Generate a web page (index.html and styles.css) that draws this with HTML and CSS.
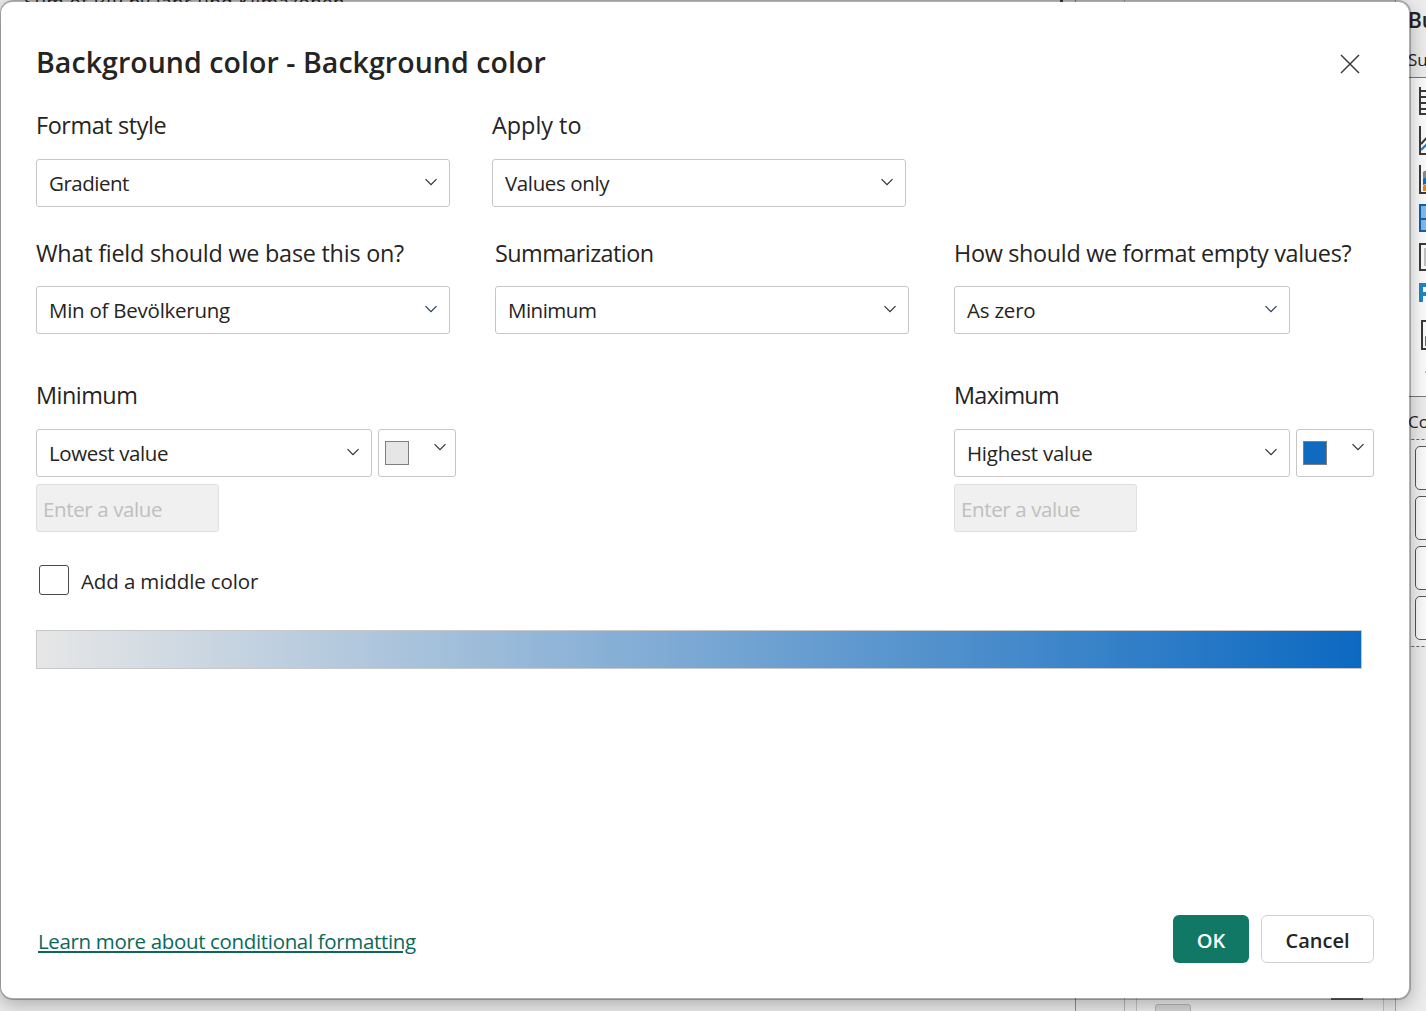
FILE: index.html
```html
<!DOCTYPE html>
<html lang="en">
<head>
<meta charset="utf-8">
<title>Background color</title>
<link rel="stylesheet" href="styles.css">
</head>
<body>
<svg class="defs" aria-hidden="true">
  <symbol id="chev" viewBox="0 0 14 8"><path d="M1.5 1.2 7 6.7 12.500 1.2" fill="none" stroke="currentColor" stroke-width="1.2"/></symbol>
</svg>
<div class="app">
  <main class="canvas"><span class="visual-title">Sum of BIP by Jahr und Klimazonen</span><i class="visual-menu"></i></main>
  <section class="filters"><div class="filter-card"><span class="filter-chip"></span><span class="filter-toggle"></span></div></section>
  <aside class="build">
    <h2 class="build-title">Build</h2>
    <p class="build-sub">Suggested</p>
    <div class="gallery">
      <svg width="30" height="318" viewBox="0 0 30 318" fill="none" stroke="#3b3a39" stroke-width="2">
        <path d="M11 9v28M11 13h20M11 19h20M11 25h20M11 31h20M11 36h20"/>
        <path d="M11 48v28h20"/><path d="M12 66l12-13"/><path d="M12 72l12-12" stroke="#1f78c1"/>
        <path d="M11 87v28h20"/><path d="M14 94q4-4 12 4v6q-6-6-12-2z" fill="#8a8886" stroke="none"/><path d="M14 101q5-3 12 4v3q-6-4-12-1z" fill="#106ebe" stroke="none"/><path d="M14 108q5-4 12 2v3H14z" fill="#e8821e" stroke="none"/>
        <path d="M11 127h24v26H11zM11 141h24" fill="#83b9e8" stroke="#0f62a9"/>
        <path d="M11 166h24v26H11z"/><path d="M16 170v18M18 170v18" stroke="#8a8886" stroke-width="1"/>
        <path d="M12 224v-17h9v9h-9" stroke="#1f86c5" stroke-width="4"/>
        <path d="M13 243h24v28H13z"/><path d="M17 268v-9h8" stroke-width="1.500"/>
        <path d="M16 294h4" stroke="#e0b478"/>
      </svg>
    </div>
    <p class="wells-title">Columns</p>
    <div class="wells"><i class="well"></i><i class="well"></i><i class="well"></i><i class="well"></i></div>
  </aside>
</div>

<div class="dialog" role="dialog">
  <header class="head">
    <h1 class="title">Background color - Background color</h1>
    <svg class="close" viewBox="0 0 20 20"><path d="M1 1 19 19M19 1 1 19" stroke="#3b3a39" stroke-width="1.5"/></svg>
  </header>
  <div class="row row-a">
    <div class="field"><label class="label l1">Format style</label><div class="select"><span class="v1">Gradient</span><svg class="chev"><use href="#chev"/></svg></div></div>
    <div class="field"><label class="label l2">Apply to</label><div class="select"><span class="v2">Values only</span><svg class="chev"><use href="#chev"/></svg></div></div>
  </div>
  <div class="row row-b">
    <div class="field"><label class="label l3">What field should we base this on?</label><div class="select"><span class="v3">Min of Bevölkerung</span><svg class="chev blue"><use href="#chev"/></svg></div></div>
    <div class="field"><label class="label l4">Summarization</label><div class="select"><span class="v4">Minimum</span><svg class="chev"><use href="#chev"/></svg></div></div>
    <div class="field narrow"><label class="label l5">How should we format empty values?</label><div class="select"><span class="v5">As zero</span><svg class="chev blue"><use href="#chev"/></svg></div></div>
  </div>
  <div class="row row-c">
    <div class="field range"><label class="label l6">Minimum</label>
      <div class="pair"><div class="select"><span class="v6">Lowest value</span><svg class="chev"><use href="#chev"/></svg></div><div class="picker"><i class="swatch low"></i><svg class="chev"><use href="#chev"/></svg></div></div>
      <div class="entry"><span class="v7">Enter a value</span></div>
    </div>
    <div class="field range"><label class="label l7">Maximum</label>
      <div class="pair"><div class="select"><span class="v8">Highest value</span><svg class="chev"><use href="#chev"/></svg></div><div class="picker"><i class="swatch high"></i><svg class="chev"><use href="#chev"/></svg></div></div>
      <div class="entry"><span class="v7">Enter a value</span></div>
    </div>
  </div>
  <div class="check"><i class="box"></i><span class="v9">Add a middle color</span></div>
  <div class="ramp"></div>
  <footer class="foot">
    <a class="learn">Learn more about conditional formatting</a>
    <div class="actions"><button class="btn ok">OK</button><button class="btn cancel">Cancel</button></div>
  </footer>
</div>
</body>
</html>
```
FILE: styles.css
```css
* { box-sizing: border-box; }
body { margin: 0; width: 1426px; height: 1011px; overflow: hidden; position: relative; font-family: "Open Sans", "Noto Sans", sans-serif; font-size: 20.5px; color: #252423; }
.defs { position: absolute; width: 0; height: 0; }
i { display: block; }

/* report window behind the dialog */
.app { display: flex; height: 1011px; background: #e6e6e6; overflow: hidden; }
.canvas { width: 1076px; display: flex; justify-content: space-between; align-items: flex-start; padding: 0 12px 0 24px; border-right: 1px solid #8f8f8f; background: #ebebeb; overflow: hidden; }
.visual-title { margin-top: -10px; font-size: 18.5px; line-height: 24px; letter-spacing: 0.55px; white-space: nowrap; }
.visual-menu { width: 3px; height: 2px; background: #444; }
.filters { width: 320px; padding: 0 11px; display: flex; align-items: flex-end; border-right: 1px solid #aaa; background: linear-gradient(#b5b5b5, #b5b5b5) 48px 0 / 1px 100% no-repeat #e9e9e9; }
.filter-card { flex: 1; height: 13px; display: flex; justify-content: space-between; margin-left: 49px; padding: 0 20px 0 18px; border: solid #c2c2c2; border-width: 0 1px; background: #ededed; }
.filter-chip { width: 36px; height: 20px; margin-top: 6px; border: 1px solid #b5b5b5; border-radius: 3px; background: #d6d6d6; }
.filter-toggle { width: 32px; height: 2px; background: #666; }
.build { width: 30px; flex: none; overflow: hidden; background: #ececec; padding-top: 6px; }
.build-title { margin: 0 0 0 12px; font-size: 21px; line-height: 29px; font-weight: 600; }
.build-sub { margin: 13px 0 5px 12px; font-size: 17px; line-height: 24px; white-space: nowrap; }
.gallery { height: 320px; padding-left: 13px; border: solid #777; border-width: 1px 0; background: #fafafa; }
.gallery svg { display: block; }
.wells-title { margin: 12px 0 4px 12px; font-size: 17px; line-height: 26px; white-space: nowrap; }
.wells { width: 100px; height: 208px; padding: 6px 0 0 19px; display: grid; gap: 6px; grid-auto-rows: 44px; border: dashed #666; border-width: 1px 0; background: #f2f2f2; }
.well { border: 1px solid #555; border-radius: 5px; background: #fafafa; }

.dialog { position: absolute; left: 0; top: 0; width: 1411px; height: 1000px; padding: 40px 35px 0; border: solid rgba(0,0,0,.26); border-width: 2px 2px 2px 1px; border-radius: 13px; background: #fff; background-clip: padding-box; box-shadow: 0 5px 18px rgba(0,0,0,.26); }
.head { height: 68px; display: flex; justify-content: space-between; }
.title { margin: 0; font-size: 28.5px; line-height: 40px; letter-spacing: 0.06px; font-weight: 600; white-space: nowrap; }
.close { width: 20px; height: 20px; margin: 12px 14px 0 0; }

.row { display: flex; }
.row-a { gap: 42px; height: 128px; }
.row-b { gap: 45px; height: 142px; }
.row-c { gap: 498px; height: 185px; }
.field { width: 414px; flex: none; }
.narrow { width: 336px; }
.range { width: 420px; }
.label { display: block; height: 32px; line-height: 30px; margin-bottom: 17px; font-size: 23.4px; white-space: nowrap; }
.row-b .label { margin-bottom: 16px; }
.select { height: 48px; display: flex; align-items: center; justify-content: space-between; padding: 0 11px 0 12px; border: 1px solid #c8c6c4; border-radius: 3px; white-space: nowrap; }
.chev { width: 14px; height: 8px; color: #323130; margin-top: -2px; }
.blue { color: #243a5e; }
.pair { display: flex; gap: 6px; }
.pair .select { width: 336px; }
.picker { width: 78px; height: 48px; display: flex; justify-content: space-between; padding: 11px 8px 0 6px; border: 1px solid #c8c6c4; border-radius: 3px; }
.picker .chev { margin-top: 2px; }
.swatch { width: 24px; height: 24px; border: 1px solid #7f7f7f; }
.low { background: #e6e6e6; }
.high { background: #0f6ac0; }
.entry { width: 183px; height: 48px; margin-top: 7px; padding-left: 6px; line-height: 48px; border: 1px solid #e1dfdd; border-radius: 3px; background: #f0f0f0; color: #bfbfbf; }

/* text tracking */
.l1 { letter-spacing: -0.4px; }
.l3 { letter-spacing: -0.24px; }
.l4 { letter-spacing: -0.54px; }
.l5 { letter-spacing: -0.32px; }
.l6 { letter-spacing: -0.5px; }
.l7 { letter-spacing: -0.7px; }
.v1, .v4 { letter-spacing: -0.5px; }
.v2, .v6, .v7 { letter-spacing: -0.38px; }
.v3, .v8 { letter-spacing: -0.25px; }
.v5 { letter-spacing: -0.2px; }
.v9 { letter-spacing: -0.12px; }

.check { height: 30px; display: flex; gap: 12px; padding-left: 3px; line-height: 33px; }
.box { width: 30px; height: 30px; border: 1px solid #4a4a4a; border-radius: 3px; }
.ramp { width: 1326px; height: 39px; margin-top: 35px; border: 1px solid #c8c8c8; background: linear-gradient(90deg, #e6e6e6, #0c69c1); }
.foot { height: 48px; margin-top: 246px; display: flex; justify-content: space-between; }
.learn { margin-left: 2px; line-height: 52px; letter-spacing: -0.34px; color: #0c695a; text-decoration: underline; text-decoration-thickness: 2px; text-underline-offset: 2px; white-space: nowrap; }
.actions { display: flex; gap: 12px; }
.btn { height: 48px; padding: 2px 0 0; border-radius: 6px; font: 600 20px "Open Sans", "Noto Sans", sans-serif; }
.ok { width: 76px; border: 0; background: #117865; color: #fff; }
.cancel { width: 113px; border: 1px solid #d1d1d1; background: #fff; color: #242424; }
```
